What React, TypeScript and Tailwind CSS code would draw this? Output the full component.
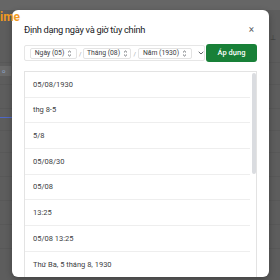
import React from "react";

const UpDown = () => (
  <svg width="5" height="7" viewBox="0 0 5 7" className="ml-[3px] shrink-0" fill="none" stroke="#5f6368" strokeWidth="0.9">
    <path d="M1 2.4 L2.5 1 L4 2.4" />
    <path d="M1 4.6 L2.5 6 L4 4.6" />
  </svg>
);

const Chip = ({ label, w }: { label: string; w: string }) => (
  <div className={`flex h-[11px] shrink-0 items-center justify-center whitespace-nowrap rounded-[2px] border border-[#e3e3e3] text-[6.8px] leading-none text-[#3c4043] ${w}`}>
    <span>{label}</span>
    <UpDown />
  </div>
);

const rows = [
  "05/08/1930",
  "thg 8-5",
  "5/8",
  "05/08/30",
  "05/08",
  "13:25",
  "05/08 13:25",
  "Thứ Ba, 5 tháng 8, 1930",
];

export default function App() {
  return (
    <div
      className="relative h-[280px] w-[280px] overflow-hidden bg-[#5d5d5d]"
      style={{ fontFamily: "Roboto, 'Noto Sans', sans-serif" }}
    >
      {/* background spreadsheet hints */}
      <div className="absolute left-0 top-0 h-[10px] w-[280px] bg-[#666666]" />
      <div className="absolute left-0 top-[66px] h-[10px] w-[11px] bg-[#6a6a6a] pl-[2px] text-[6px] leading-[10px] text-[#8fa8d0]">o</div>
      <div className="absolute left-0 top-[117px] h-[1px] w-[12px] bg-[#4f68c8]" />
      <div className="absolute right-[1px] top-[35px] w-[9px] text-[7px] leading-none text-[#3a3a3a]">⊥</div>
      {[62, 84, 108, 130, 152, 176, 200, 224, 248].map((y) => (
        <div key={y} className="absolute right-0 h-[1px] w-[11px] bg-[#585858]" style={{ top: y }} />
      ))}
      {[62, 84, 108, 130, 152, 176, 200, 224, 248].map((y) => (
        <div key={"l" + y} className="absolute left-0 h-[1px] w-[12px] bg-[#585858]" style={{ top: y }} />
      ))}

      {/* dialog */}
      <div className="absolute left-[12px] top-[10px] flex h-[267px] w-[257px] flex-col rounded-[6px] bg-white px-[12px] shadow-[0_2px_6px_rgba(0,0,0,0.3)]">
        <div className="mt-[13px] flex h-[14px] items-center justify-between">
          <div className="whitespace-nowrap text-[9.3px] leading-none tracking-[-0.3px] text-[#202124]">Định dạng ngày và giờ tùy chỉnh</div>
          <div className="mr-[3px] text-[10px] leading-none text-[#5f6368]">×</div>
        </div>

        <div className="mt-[7px] flex h-[18px] items-center justify-between">
          <div className="flex h-[16px] w-[181px] items-center rounded-[2px] border border-[#e6e6e6] pl-[5px]">
            <Chip label="Ngày (05)" w="w-[47px]" />
            <span className="mx-[2px] text-[6px] text-[#9aa0a6]">/</span>
            <Chip label="Tháng (08)" w="w-[48px]" />
            <span className="mx-[2px] text-[6px] text-[#9aa0a6]">/</span>
            <Chip label="Năm (1930)" w="w-[54px]" />
            <svg width="6" height="4" viewBox="0 0 6 4" className="ml-[6px] shrink-0" fill="none" stroke="#5f6368" strokeWidth="1">
              <path d="M0.7 0.8 L3 3 L5.3 0.8" />
            </svg>
          </div>
          <div className="flex h-[18px] w-[51px] items-center justify-center rounded-[3px] bg-[#188038] text-[7.5px] font-medium text-white">
            Áp dụng
          </div>
        </div>

        <div className="mt-[9px] flex min-h-0 flex-1 overflow-hidden border border-b-0 border-[#e3e3e3]">
          <div className="flex w-[225px] flex-col">
            {rows.map((r) => (
              <div
                key={r}
                className="flex h-[25.7px] shrink-0 items-center border-b border-[#eeeeee] pl-[8px] text-[7.5px] text-[#3c4043]"
              >
                {r}
              </div>
            ))}
          </div>
          <div className="flex-1 pl-[2px] pt-[1px]">
            <div className="h-[101px] w-[4px] rounded-[2px] bg-[#dadce0]" />
          </div>
        </div>
      </div>

      {/* orange overlay text */}
      <div className="absolute left-0 top-[11px] text-[12px] font-bold leading-none text-[#f29a1f]">ime</div>
    </div>
  );
}
